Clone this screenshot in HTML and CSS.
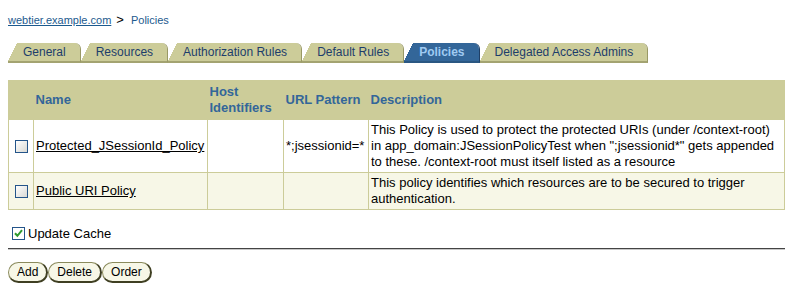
FILE: index.html
```html
<!DOCTYPE html>
<html lang="en">
<head>
    <meta charset="UTF-8">
    <title>Policies</title>
    <link rel="stylesheet" href="styles.css">
</head>
<body>
    <div class="crumbs">
        <a href="#">webtier.example.com</a><span class="crumb-sep">&gt;</span><span class="crumb-here">Policies</span>
    </div>

    <ul class="tabs">
        <li class="tab">General</li>
        <li class="tab">Resources</li>
        <li class="tab">Authorization Rules</li>
        <li class="tab">Default Rules</li>
        <li class="tab tab-on">Policies</li>
        <li class="tab">Delegated Access Admins</li>
    </ul>

    <table class="grid">
        <colgroup>
            <col class="c-check">
            <col class="c-name">
            <col class="c-host">
            <col class="c-url">
            <col>
        </colgroup>
        <thead>
            <tr>
                <th></th>
                <th>Name</th>
                <th>Host<br>Identifiers</th>
                <th>URL Pattern</th>
                <th>Description</th>
            </tr>
        </thead>
        <tbody>
            <tr>
                <td class="sel"><span class="box"></span></td>
                <td><a href="#">Protected_JSessionId_Policy</a></td>
                <td></td>
                <td>*;jsessionid=*</td>
                <td>This Policy is used to protect the protected URIs (under /context-root) in app_domain:JSessionPolicyTest when ";jsessionid*" gets appended to these. /context-root must itself listed as a resource</td>
            </tr>
            <tr class="alt">
                <td class="sel"><span class="box"></span></td>
                <td><a href="#">Public URI Policy</a></td>
                <td></td>
                <td></td>
                <td>This policy identifies which resources are to be secured to trigger authentication.</td>
            </tr>
        </tbody>
    </table>

    <div class="cache">
        <svg class="cache-box" width="13" height="13" viewBox="0 0 13 13">
            <rect x="0.5" y="0.5" width="12" height="12" fill="#fff" stroke="#24558a"/>
            <path d="M3 6.2 L5.4 8.8 L10 3.2" fill="none" stroke="#2e9a2e" stroke-width="2"/>
        </svg>
        <span>Update Cache</span>
    </div>

    <div class="rule"></div>

    <div class="buttons">
        <button>Add</button><button>Delete</button><button>Order</button>
    </div>
</body>
</html>
```

FILE: styles.css
```css
body {
    margin: 0;
    padding: 0 8px;
    font-family: "Liberation Sans", Arial, sans-serif;
    font-size: 13px;
    color: #000;
    background: #fff;
}
.crumbs {
    margin-top: 13px;
    height: 14px;
    line-height: 14px;
    font-size: 11px;
}
.crumbs a {
    color: #1c5a8e;
}
.crumb-sep {
    color: #000;
    font-size: 13px;
    margin: 0 7px 0 5px;
}
.crumb-here {
    color: #1c5a8e;
}
.tabs {
    list-style: none;
    margin: 16px 0 0;
    padding: 0;
    display: flex;
}
.tab {
    font-size: 12px;
    line-height: 18px;
    height: 18px;
    padding: 0 14px 0 15px;
    color: #1d3d6b;
    border-right: 1px solid #999966;
    border-bottom: 2px solid #a3a371;
    border-top-right-radius: 6px;
    background:
        linear-gradient(to top left, #cccc99 50%, transparent 50%) 0 0 / 9px 100% no-repeat,
        linear-gradient(#cccc99, #cccc99) 9px 0 / 100% 100% no-repeat;
    background-clip: padding-box;
}
.tab-on {
    font-weight: bold;
    color: #9fcaf2;
    border-right-color: #1f3f66;
    border-bottom-color: #2a5782;
    background:
        linear-gradient(to top left, #336699 50%, transparent 50%) 0 0 / 9px 100% no-repeat,
        linear-gradient(#336699, #336699) 9px 0 / 100% 100% no-repeat;
    background-clip: padding-box;
}
.grid {
    margin-top: 17px;
    width: 777px;
    border-collapse: collapse;
    table-layout: fixed;
    border: 1px solid #cccc99;
}
.c-check { width: 25px; }
.c-name { width: 174px; }
.c-host { width: 76px; }
.c-url { width: 85px; }
.grid th {
    background: #cccc99;
    color: #336699;
    font-weight: bold;
    text-align: left;
    line-height: 16px;
    height: 31px;
    padding: 3px 2px;
    vertical-align: middle;
}
.grid td {
    border: 1px solid #cccc99;
    line-height: 16px;
    padding: 2px 2px;
    vertical-align: middle;
}
.grid td a {
    color: #000;
}
.grid .alt td {
    background: #f7f7e7;
}
.grid .sel {
    padding-left: 6px;
}
.box {
    display: block;
    width: 11px;
    height: 11px;
    border: 1px solid #24558a;
    background: linear-gradient(135deg, #ffffff, #d9d9d4);
}
.cache {
    margin-top: 15px;
    display: flex;
    align-items: center;
    gap: 3px;
    padding-left: 4px;
    height: 17px;
}
.rule {
    margin-top: 6px;
    width: 777px;
    border-top: 1px solid #444;
    border-bottom: 1px solid #c8c8c8;
}
.buttons {
    margin-top: 12px;
    display: flex;
}
.buttons button {
    font-family: "Liberation Sans", Arial, sans-serif;
    font-size: 12px;
    height: 21px;
    padding: 0 8px;
    margin: 0;
    color: #000;
    background: #f7f7e7;
    border: 1px solid #6b6b3c;
    border-right-width: 2px;
    border-bottom-width: 2px;
    border-color: #8a8a5c #3f3f22 #3f3f22 #8a8a5c;
    border-radius: 11px;
    cursor: pointer;
}
```
